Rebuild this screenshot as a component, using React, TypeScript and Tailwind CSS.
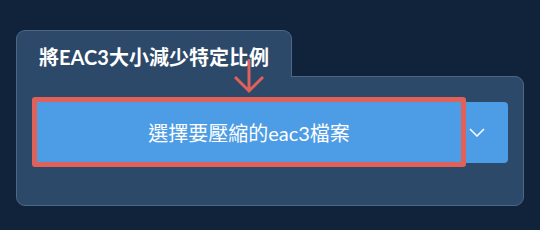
import React from "react";

export default function App() {
  const font = { fontFamily: '"Lato", "Noto Sans CJK TC", sans-serif' };
  return (
    <div
      className="w-[540px] h-[230px] bg-[#11233a] pt-[30px] pl-[16px] overflow-hidden"
      style={font}
    >
      <div className="relative w-[508px]">
        <div className="relative z-10 w-[276px] h-[47px] -mb-px bg-[#2c4969] border border-b-0 border-[#4d6886] rounded-t-[9px] flex justify-center pt-[11px]">
          <span className="text-[20px] font-bold text-white leading-[30px]">
            將EAC3大小減少特定比例
          </span>
        </div>
        <div className="h-[130px] bg-[#2c4969] border border-[#4d6886] rounded-b-[9px] rounded-tr-[9px] px-[15px] pt-[25px]">
          <div className="flex h-[61px]">
            <div className="w-[434px] h-full bg-[#4d9ce6] rounded-l-[4px] flex items-center justify-center">
              <span className="text-[20px] text-white leading-none">
                選擇要壓縮的eac3檔案
              </span>
            </div>
            <div className="flex-1 h-full bg-[#4d9ce6] rounded-r-[4px] flex items-center pl-[3px]">
              <svg width="16" height="9" viewBox="0 0 16 9" fill="none">
                <path d="M1 1 L8 8 L15 1" stroke="white" strokeWidth="1.5" />
              </svg>
            </div>
          </div>
        </div>
        <div className="absolute left-[16px] top-[67px] w-[434px] h-[70px] border-[5px] border-[#e0605a] rounded-[3px] pointer-events-none" />
        <svg
          className="absolute left-0 top-0 z-20 pointer-events-none"
          width="508"
          height="100"
          viewBox="16 30 508 100"
        >
          <path
            d="M249 59 L249 91 M235 77 L249 91 L263 77"
            stroke="#e0605a"
            strokeWidth="3"
            fill="none"
          />
        </svg>
      </div>
    </div>
  );
}
